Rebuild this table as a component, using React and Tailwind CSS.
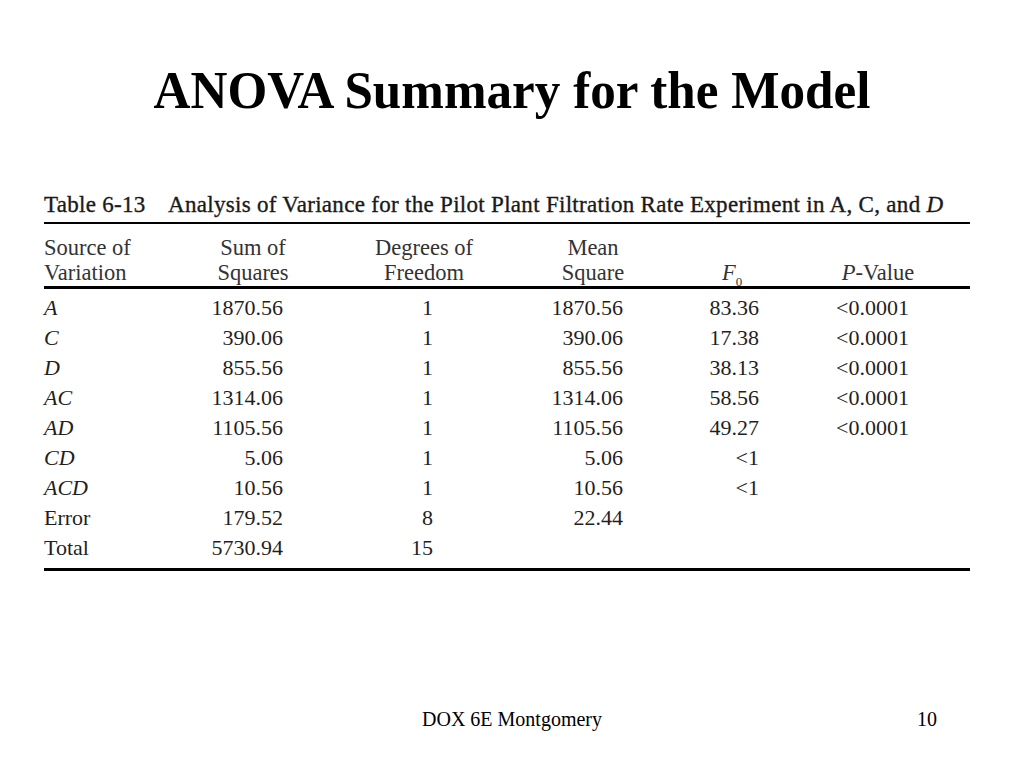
import React from "react";

const rows = [
  { src: "A", it: true, ss: "1870.56", df: "1", ms: "1870.56", f: "83.36", p: "<0.0001" },
  { src: "C", it: true, ss: "390.06", df: "1", ms: "390.06", f: "17.38", p: "<0.0001" },
  { src: "D", it: true, ss: "855.56", df: "1", ms: "855.56", f: "38.13", p: "<0.0001" },
  { src: "AC", it: true, ss: "1314.06", df: "1", ms: "1314.06", f: "58.56", p: "<0.0001" },
  { src: "AD", it: true, ss: "1105.56", df: "1", ms: "1105.56", f: "49.27", p: "<0.0001" },
  { src: "CD", it: true, ss: "5.06", df: "1", ms: "5.06", f: "<1", p: "" },
  { src: "ACD", it: true, ss: "10.56", df: "1", ms: "10.56", f: "<1", p: "" },
  { src: "Error", it: false, ss: "179.52", df: "8", ms: "22.44", f: "", p: "" },
  { src: "Total", it: false, ss: "5730.94", df: "15", ms: "", f: "", p: "" },
];

const cols = "grid grid-cols-[156px_106px_236px_102px_176px_116px_34px]";

export default function App() {
  return (
    <div
      className="w-[1024px] h-[768px] bg-white flex flex-col text-black overflow-hidden"
      style={{ fontFamily: '"Liberation Serif", "Times New Roman", serif' }}
    >
      <h1 className="pt-[60px] text-center text-[53px] leading-[60px] font-bold scale-x-[0.965]">
        ANOVA Summary for the Model
      </h1>

      <div className="ml-[44px] w-[926px] mt-[71px]">
        <div className="flex text-[23px] leading-[28px] tracking-[0.3px] text-[#1a1a1a] pb-[3px] [-webkit-text-stroke:0.35px_#1a1a1a]">
          <span className="w-[124px]">Table 6-13</span>
          <span>
            Analysis of Variance for the Pilot Plant Filtration Rate Experiment in A, C, and <i>D</i>
          </span>
        </div>
        <div className="h-[2px] bg-black" />

        <div className={`${cols} pt-[11px] text-[22.5px] leading-[25px] text-[#333]`}>
          <div className="text-left">
            Source of
            <br />
            Variation
          </div>
          <div className="text-center">
            Sum of
            <br />
            Squares
          </div>
          <div className="text-center">
            Degrees of
            <br />
            Freedom
          </div>
          <div className="text-center">
            Mean
            <br />
            Square
          </div>
          <div className="text-center">
            <br />
            <i>F</i>
            <sub className="text-[13px] align-[-3px]">0</sub>
          </div>
          <div className="text-center">
            <br />
            <i>P</i>-Value
          </div>
          <div />
        </div>
        <div className="h-[3px] bg-black mt-[1px]" />

        <div className="pt-[4px] pb-[5px] text-[22px] leading-[30px] text-[#1f1f1f]">
          {rows.map((r) => (
            <div key={r.src} className={`${cols} h-[30px]`}>
              <div className={r.it ? "italic" : ""}>{r.src}</div>
              <div className="text-right pr-[23px]">{r.ss}</div>
              <div className="text-right pr-[109px]">{r.df}</div>
              <div className="text-right pr-[21px]">{r.ms}</div>
              <div className="text-right pr-[61px]">{r.f}</div>
              <div className="text-left pl-[16px]">{r.p}</div>
              <div />
            </div>
          ))}
        </div>
        <div className="h-[3px] bg-black" />
      </div>

      <div className="mt-auto pb-[37px] grid grid-cols-[1fr_auto_1fr] text-[20px] leading-[24px]">
        <div />
        <div className="text-center">DOX 6E Montgomery</div>
        <div className="text-right pr-[87px]">10</div>
      </div>
    </div>
  );
}
